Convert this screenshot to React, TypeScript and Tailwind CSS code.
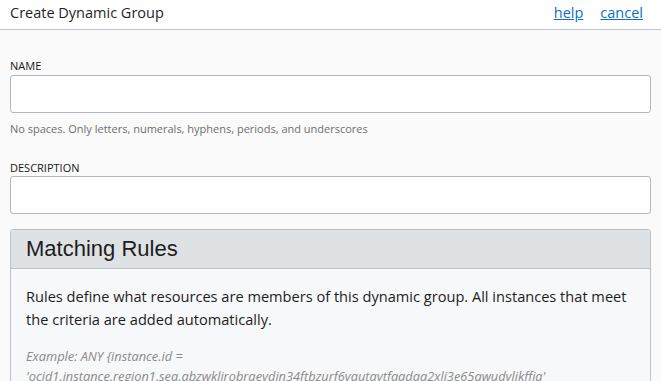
const App: React.FC = () => {
  return (
    <div className="min-h-screen bg-[#fafafa] font-['Open_Sans',sans-serif] text-[#222]">
      <div className="flex h-[30px] items-center justify-between border-b border-[#c3c3cb] bg-white px-[10px]">
        <h1 className="text-[14.5px] leading-[20px] text-[#1f1f1f] pb-[3px]">Create Dynamic Group</h1>
        <div className="flex gap-[17px] pr-[8px] pb-[3px] text-[14.5px] leading-[20px]">
          <a href="#" className="text-[#0d6fc9] underline">help</a>
          <a href="#" className="text-[#0d6fc9] underline">cancel</a>
        </div>
      </div>

      <div className="px-[10px]">
        <label className="block pt-[28px] text-[11px] leading-[16px] text-[#161616]">NAME</label>
        <input
          type="text"
          className="mt-[1px] block h-[38px] w-full rounded-[3px] border border-[#b4b7bd] bg-white"
        />
        <p className="pt-[8px] text-[11px] leading-[16px] text-[#6f6f6f]">
          No spaces. Only letters, numerals, hyphens, periods, and underscores
        </p>

        <label className="block pt-[23px] text-[11px] leading-[16px] text-[#161616]">DESCRIPTION</label>
        <input
          type="text"
          className="block h-[38px] w-full rounded-[3px] border border-[#b4b7bd] bg-white"
        />

        <div className="mt-[15px] rounded-t-[3px] border border-[#bdc1c7] bg-[#f7f8f9]">
          <div className="flex h-[39px] items-center border-b border-[#bdc1c7] bg-[#dfe2e5] px-[15px]">
            <h2 className="font-['Liberation_Sans',Arial,sans-serif] text-[22px] leading-[26px] text-[#1d1d1d]">
              Matching Rules
            </h2>
          </div>
          <div className="px-[15px] pt-[16px]">
            <p className="text-[14.6px] leading-[23px] text-[#1d1d1d]">
              Rules define what resources are members of this dynamic group. All instances that meet the criteria are added automatically.
            </p>
            <p className="pt-[15px] text-[12.8px] italic leading-[20px] text-[#8a8a8a]">
              Example: ANY {"{"}instance.id =
              <br />
              'ocid1.instance.region1.sea.abzwklirobrqeydin34ftbzurf6yautaytfaadaa2xlj3e65awudylikffia'
            </p>
          </div>
        </div>
      </div>
    </div>
  );
};

export default App;
